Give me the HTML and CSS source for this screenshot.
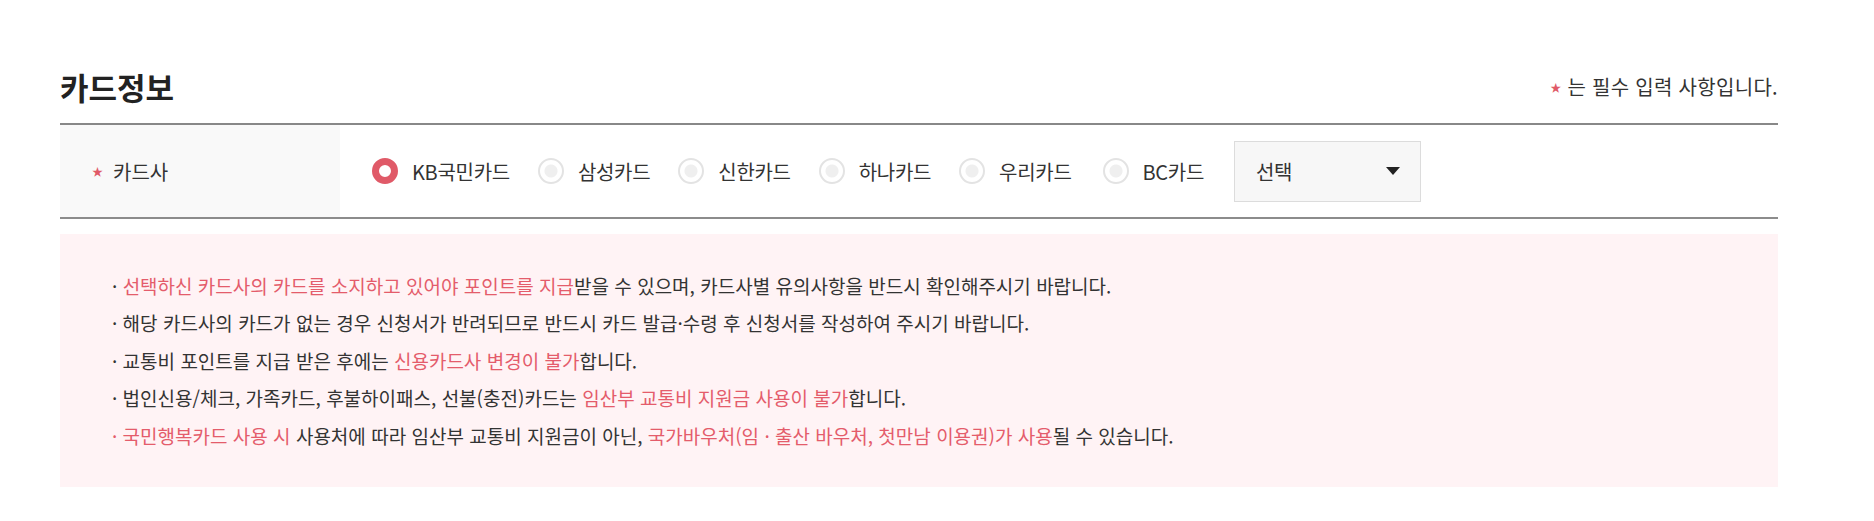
FILE: index.html
```html
<!DOCTYPE html>
<html lang="ko">
<head>
    <meta charset="UTF-8">
    <meta name="viewport" content="width=device-width, initial-scale=1.0">
    <title>카드정보</title>
    <link rel="stylesheet" href="styles.css">
</head>
<body>
    <div class="card-section">
        <div class="section-head">
            <h2>카드정보</h2>
            <p class="required-note"><span class="star">★</span> 는 필수 입력 사항입니다.</p>
        </div>

        <div class="form-table">
            <div class="form-label"><span class="star">★</span> 카드사</div>
            <div class="form-field">
                <label class="radio-item"><input type="radio" name="card" value="kb" checked><span class="radio-mark"></span>KB국민카드</label>
                <label class="radio-item"><input type="radio" name="card" value="samsung"><span class="radio-mark"></span>삼성카드</label>
                <label class="radio-item"><input type="radio" name="card" value="shinhan"><span class="radio-mark"></span>신한카드</label>
                <label class="radio-item"><input type="radio" name="card" value="hana"><span class="radio-mark"></span>하나카드</label>
                <label class="radio-item"><input type="radio" name="card" value="woori"><span class="radio-mark"></span>우리카드</label>
                <label class="radio-item bc"><input type="radio" name="card" value="bc"><span class="radio-mark"></span>BC카드</label>
                <div class="select-box">
                    <span>선택</span>
                    <span class="arrow"></span>
                </div>
            </div>
        </div>

        <ul class="notice">
            <li>· <em>선택하신 카드사의 카드를 소지하고 있어야 포인트를 지급</em>받을 수 있으며, 카드사별 유의사항을 반드시 확인해주시기 바랍니다.</li>
            <li>· 해당 카드사의 카드가 없는 경우 신청서가 반려되므로 반드시 카드 발급·수령 후 신청서를 작성하여 주시기 바랍니다.</li>
            <li>· 교통비 포인트를 지급 받은 후에는 <em>신용카드사 변경이 불가</em>합니다.</li>
            <li>· 법인신용/체크, 가족카드, 후불하이패스, 선불(충전)카드는 <em>임산부 교통비 지원금 사용이 불가</em>합니다.</li>
            <li><em>· 국민행복카드 사용 시</em> 사용처에 따라 임산부 교통비 지원금이 아닌, <em>국가바우처(임 · 출산 바우처, 첫만남 이용권)가 사용</em>될 수 있습니다.</li>
        </ul>
    </div>
</body>
</html>
```

FILE: styles.css
```css
body {
    margin: 0;
    font-family: "Noto Sans CJK KR", "Noto Sans", sans-serif;
    color: #333;
    background-color: #fff;
}
.card-section {
    width: 1718px;
    padding: 66px 0 0 60px;
}
.section-head {
    display: flex;
    justify-content: space-between;
    align-items: center;
    height: 40px;
    margin-bottom: 17px;
}
.section-head h2 {
    margin: 0;
    font-size: 31px;
    font-weight: 700;
    color: #222;
}
.required-note {
    margin: 0;
    font-size: 20px;
    color: #333;
    letter-spacing: 0.3px;
}
.star {
    color: #e05a68;
    font-size: 11px;
    vertical-align: 3px;
}
/* table row */
.form-table {
    display: flex;
    height: 92px;
    border-top: 2px solid #888;
    border-bottom: 2px solid #8c8c8c;
}
.form-label {
    width: 248px;
    padding-left: 32px;
    display: flex;
    align-items: center;
    gap: 10px;
    background-color: #f9f9f9;
    font-size: 20px;
    color: #333;
}
.form-label .star {
    vertical-align: 0;
}
.form-field {
    display: flex;
    align-items: center;
    padding-left: 32px;
    font-size: 20px;
    letter-spacing: -0.3px;
}
.radio-item {
    display: flex;
    align-items: center;
    margin-right: 28px;
    cursor: pointer;
}
.radio-item.bc {
    margin-left: 3px;
}
.radio-item input {
    display: none;
}
.radio-mark {
    box-sizing: border-box;
    width: 26px;
    height: 26px;
    margin-right: 14px;
    border: 2px solid #e3e3e3;
    border-radius: 50%;
    background: radial-gradient(circle, #efefef 0 6px, #fff 7px);
}
.radio-item input:checked + .radio-mark {
    border: 7px solid #e05a68;
    background: #fff;
}
.select-box {
    box-sizing: border-box;
    width: 187px;
    height: 61px;
    margin-left: 2px;
    padding: 0 20px 0 21px;
    display: flex;
    justify-content: space-between;
    align-items: center;
    background-color: #f7f7f7;
    border: 1px solid #dcdcdc;
    font-size: 20px;
    color: #333;
}
.arrow {
    width: 0;
    height: 0;
    border-left: 7px solid transparent;
    border-right: 7px solid transparent;
    border-top: 8px solid #222;
}
/* notice box */
.notice {
    list-style: none;
    margin: 15px 0 0;
    padding: 33px 0 33px 52px;
    background-color: #fff3f5;
    font-size: 19px;
    line-height: 37.4px;
    color: #333;
}
.notice em {
    font-style: normal;
    color: #e45c6b;
}
```
